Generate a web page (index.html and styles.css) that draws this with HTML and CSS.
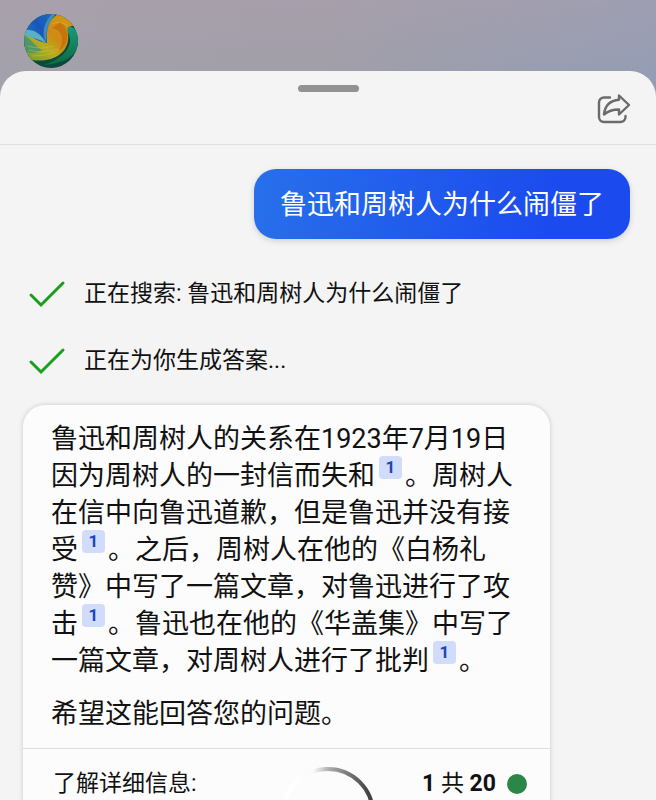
FILE: index.html
```html
<!DOCTYPE html>
<html lang="zh-CN">
<head>
    <meta charset="UTF-8">
    <title>聊天</title>
    <meta name="viewport" content="width=device-width, initial-scale=1" />
    <link rel="stylesheet" href="styles.css">
</head>
<body>
    <div class="top-bar">
        <svg class="avatar" viewBox="0 0 54 54" aria-hidden="true">
            <defs>
                <clipPath id="avatar-clip"><circle cx="27" cy="27" r="27"/></clipPath>
                <linearGradient id="gold" x1="0.9" y1="0.1" x2="0.1" y2="0.9">
                    <stop offset="0" stop-color="#cf9a14"/>
                    <stop offset="0.45" stop-color="#d08a12"/>
                    <stop offset="0.7" stop-color="#b8ac1e"/>
                    <stop offset="1" stop-color="#7fa030"/>
                </linearGradient>
                <linearGradient id="blue" x1="0" y1="0.8" x2="1" y2="0.2">
                    <stop offset="0" stop-color="#1b7fae"/>
                    <stop offset="0.5" stop-color="#1a55bd"/>
                    <stop offset="1" stop-color="#1a70b4"/>
                </linearGradient>
                <linearGradient id="green" x1="0" y1="0" x2="0" y2="1">
                    <stop offset="0" stop-color="#1a9a78"/>
                    <stop offset="1" stop-color="#0d6a40"/>
                </linearGradient>
            </defs>
            <g clip-path="url(#avatar-clip)">
                <rect width="54" height="54" fill="#0b4a3a"/>
                <path d="M0 20L22 28C20 16 24 6 34 0H54V14C48 10 43 12 44 20C46 34 36 44 22 46C16 47 8 47 2 44Z" fill="url(#gold)"/>
                <path d="M36 8C46 14 46 30 34 38C42 26 38 16 28 14Z" fill="#c2620e" opacity="0.6"/>
                <path d="M0 0H32C24 8 22 16 23 29C16 28 8 24 0 18Z" fill="url(#blue)"/>
                <path d="M32 0C25 7 22 15 22 28C17 20 20 8 28 0Z" fill="#4ba0c6" opacity="0.7"/>
                <path d="M0 16C8 15 16 18 22 29C14 25 8 23 0 22Z" fill="#5bb0c4"/>
                <path d="M0 21C8 25 10 32 18 36C12 40 5 40 0 36Z" fill="#3f9474" opacity="0.8"/>
                <path d="M44 13C50 11 54 18 54 24V34C48 46 34 50 20 51C34 46 46 38 46 26C46 20 42 18 44 13Z" fill="url(#green)"/>
                <path d="M4 32Q16 36 30 32M5 36Q18 40 34 35M8 42Q24 42 36 36M28 10Q36 6 44 12" fill="none" stroke="#dcc848" stroke-width="0.7" opacity="0.6"/>
            </g>
        </svg>
    </div>

    <div class="sheet">
        <div class="sheet-header">
            <span class="handle"></span>
            <button type="button" class="share-button" aria-label="分享">
                <svg viewBox="0 0 36 36" width="36" height="36" fill="none" stroke="#6b6b6b" stroke-width="2.4" stroke-linecap="round" stroke-linejoin="round">
                    <path d="M14 6.5H8A5 5 0 0 0 3 11.5V26A5 5 0 0 0 8 31H24.500A5 5 0 0 0 29.500 26V25"/>
                    <path d="M23 4.500L33 14L23 23.500V18.500C16 18.500 12 20 8 23.500C9 14 15 9.500 23 8.800Z"/>
                </svg>
            </button>
        </div>

        <div class="chat">
            <div class="user-message">鲁迅和周树人为什么闹僵了</div>

            <div class="status-list">
                <div class="status">
                    <svg class="check" viewBox="0 0 38 28"><path d="M3 15L13 25L35 3"/></svg>
                    <span>正在搜索: 鲁迅和周树人为什么闹僵了</span>
                </div>
                <div class="status">
                    <svg class="check" viewBox="0 0 38 28"><path d="M3 15L13 25L35 3"/></svg>
                    <span>正在为你生成答案...</span>
                </div>
            </div>

            <div class="answer">
                <div class="answer-text">
                    <p>鲁迅和周树人的关系在1923年7月19日因为周树人的一封信而失和<a href="#sources" class="cite">1</a>。周树人在信中向鲁迅道歉，但是鲁迅并没有接受<a href="#sources" class="cite">1</a>。之后，周树人在他的《白杨礼赞》中写了一篇文章，对鲁迅进行了攻击<a href="#sources" class="cite">1</a>。鲁迅也在他的《华盖集》中写了一篇文章，对周树人进行了批判<a href="#sources" class="cite">1</a>。</p>
                    <p>希望这能回答您的问题。</p>
                </div>
                <div class="answer-footer" id="sources">
                    <span>了解详细信息:</span>
                    <span class="turns"><b>1</b> 共 <b>20</b></span>
                    <span class="dot"></span>
                </div>
            </div>
        </div>
    </div>

    <!-- Loading ring over the bottom of the page -->
    <svg class="spinner" viewBox="0 0 94 94" aria-hidden="true">
        <defs>
            <linearGradient id="ring" x1="0" y1="0" x2="1" y2="0">
                <stop offset="0.1" stop-color="#ffffff"/>
                <stop offset="0.34" stop-color="#fafafa"/>
                <stop offset="0.52" stop-color="#a8a8a8"/>
                <stop offset="0.95" stop-color="#444444"/>
            </linearGradient>
        </defs>
        <circle cx="47" cy="47" r="45" fill="none" stroke="url(#ring)" stroke-width="4"/>
    </svg>
</body>
</html>
```

FILE: styles.css
```css
* {
    box-sizing: border-box;
}

body {
    margin: 0;
    height: 100vh;
    overflow: hidden;
    display: flex;
    flex-direction: column;
    color: #111111;
    background: linear-gradient(90deg, #a3a1ab 0%, #a19fa9 50%, #949db4 100%);
    font-family: Roboto, "Noto Sans CJK SC", sans-serif;
}

.top-bar {
    flex: none;
    padding: 14px 24px 3px;
    background: linear-gradient(180deg, rgba(176, 160, 174, 0.4) 0%, rgba(176, 160, 174, 0) 100%);
}

.avatar {
    display: block;
    width: 54px;
    height: 54px;
}

.sheet {
    flex: 1;
    min-height: 0;
    overflow: hidden;
    border-radius: 26px 26px 0 0;
    background-color: #f4f4f4;
}

.sheet-header {
    display: grid;
    grid-template-columns: 1fr auto 1fr;
    align-items: start;
    height: 74px;
    padding: 14px 24px 0;
    border-bottom: 1px solid #e0e0e0;
}

.handle {
    grid-column: 2;
    width: 61px;
    height: 7px;
    border-radius: 4px;
    background-color: #929292;
}

.share-button {
    justify-self: end;
    margin-top: 6px;
    padding: 0;
    border: none;
    background: none;
    cursor: pointer;
}

.share-button svg {
    display: block;
}

.chat {
    display: flex;
    flex-direction: column;
    padding: 24px 26px 24px 23px;
}

.user-message {
    align-self: flex-end;
    padding: 16px 26px 14px;
    border-radius: 22px;
    font-size: 27px;
    line-height: 40px;
    color: #ffffff;
    background: linear-gradient(100deg, #2870ea 0%, #1b4aef 80%);
    box-shadow: 0 2px 6px rgba(0, 0, 0, 0.15);
}

.status-list {
    display: flex;
    flex-direction: column;
    gap: 31px;
    margin: 37px 0 26px 5px;
}

.status {
    display: flex;
    align-items: center;
    gap: 18px;
    font-size: 23px;
    line-height: 36px;
}

.check {
    width: 38px;
    height: 28px;
    fill: none;
    stroke: #18a01c;
    stroke-width: 3;
    stroke-linecap: round;
}

.answer {
    margin-right: 80px;
    border-radius: 22px;
    background-color: #fcfcfc;
    box-shadow: 0 0 5px rgba(0, 0, 0, 0.18);
}

.answer-text {
    padding: 16px 28px 15px;
    font-size: 27px;
    line-height: 37px;
}

.answer-text p {
    margin: 0;
}

.answer-text p + p {
    margin-top: 16px;
}

.cite {
    display: inline-block;
    width: 23px;
    height: 23px;
    margin: -12px 3px 0 4px;
    border-radius: 4px;
    font-size: 17px;
    font-weight: bold;
    line-height: 23px;
    text-align: center;
    vertical-align: 12px;
    text-decoration: none;
    color: #2344b8;
    background-color: #d1dcfa;
}

.answer-footer {
    display: flex;
    align-items: center;
    padding: 17px 23px 17px 30px;
    border-top: 1px solid #dedede;
    font-size: 23px;
    line-height: 36px;
}

.turns {
    margin-left: auto;
}

.dot {
    width: 20px;
    height: 20px;
    margin-left: 11px;
    border-radius: 50%;
    background-color: #2b8747;
}

.spinner {
    position: absolute;
    bottom: -61px;
    left: 50%;
    width: 94px;
    height: 94px;
    transform: translateX(-50%);
}
```
